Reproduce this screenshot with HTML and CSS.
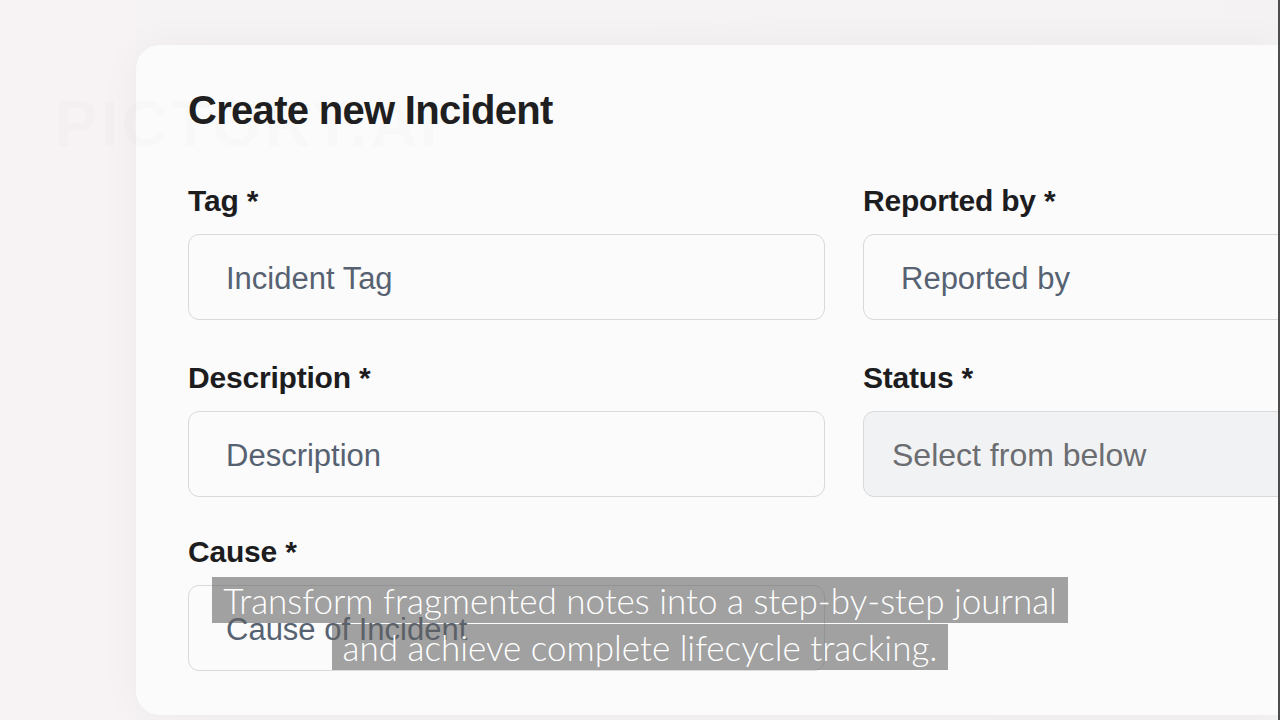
FILE: index.html
```html
<!DOCTYPE html>
<html lang="en">
<head>
<meta charset="utf-8">
<title>Create new Incident</title>
<link rel="stylesheet" href="styles.css">
</head>
<body>
<div class="page">
  <div class="card">
    <h1 class="title">Create new Incident</h1>
    <div class="grid">
      <div class="field">
        <div class="label">Tag *</div>
        <div class="input">Incident Tag</div>
      </div>
      <div class="field">
        <div class="label">Reported by *</div>
        <div class="input">Reported by</div>
      </div>
      <div class="field">
        <div class="label">Description *</div>
        <div class="input">Description</div>
      </div>
      <div class="field">
        <div class="label">Status *</div>
        <div class="input select">Select from below</div>
      </div>
      <div class="field cause">
        <div class="label">Cause *</div>
        <div class="input">Cause of Incident</div>
      </div>
    </div>
  </div>
</div>
<div class="watermark">
  <div class="wm-small">VIDEO MADE WITH</div>
  <div class="wm-big">PICTORY.AI</div>
</div>
<div class="caption">
  <span class="cap-line">Transform fragmented notes into a step-by-step journal</span>
  <span class="cap-line">and achieve complete lifecycle tracking.</span>
</div>
</body>
</html>
```
FILE: styles.css
```css
html, body {
  margin: 0;
  padding: 0;
}
body {
  width: 1280px;
  height: 720px;
  overflow: hidden;
  background: linear-gradient(90deg, #f7f3f5 0%, #f5f3f4 40%, #f4f2f3 100%);
  font-family: "Liberation Sans", Arial, sans-serif;
  position: relative;
}
.page {
  box-sizing: border-box;
  width: 1280px;
  height: 720px;
  padding: 45px 0 0 136px;
  border-right: 2px solid #4e4e4e;
  display: flex;
}
.card {
  box-sizing: border-box;
  width: 1142px;
  height: 670px;
  background: #fbfbfb;
  border-radius: 24px 0 0 24px;
  box-shadow: 0 0 40px rgba(0, 0, 0, 0.045);
  padding: 41px 0 0 52px;
  overflow: hidden;
}
.title {
  margin: 0;
  font-size: 40px;
  line-height: 48px;
  font-weight: 700;
  letter-spacing: -0.7px;
  color: #1f1f21;
}
.grid {
  margin-top: 49px;
  display: grid;
  grid-template-columns: 637px 637px;
  column-gap: 38px;
  row-gap: 40px;
}
.cause {
  margin-top: -3px;
}
.label {
  font-size: 30px;
  line-height: 36px;
  font-weight: 700;
  color: #1d1d1f;
  letter-spacing: -0.2px;
  margin-bottom: 15px;
}
.input {
  box-sizing: border-box;
  height: 86px;
  border: 1.5px solid #d8d9db;
  border-radius: 11px;
  background: #fbfbfb;
  padding-left: 37px;
  padding-top: 3px;
  display: flex;
  align-items: center;
  font-size: 31px;
  color: #566272;
}
.input.select {
  background: #f1f2f4;
  padding-left: 28px;
  font-size: 32px;
  color: #6c6d71;
}
.watermark {
  position: absolute;
  left: 55px;
  top: 46px;
  color: rgba(0, 0, 0, 0.012);
  font-family: "Liberation Sans", Arial, sans-serif;
  font-weight: 700;
  pointer-events: none;
}
.wm-small {
  font-size: 36px;
  line-height: 42px;
  letter-spacing: 1px;
}
.wm-big {
  font-size: 64px;
  line-height: 72px;
  letter-spacing: 3px;
}
.caption {
  position: absolute;
  left: 0;
  right: 0;
  top: 577px;
  display: flex;
  flex-direction: column;
  align-items: center;
  gap: 1px;
}
.cap-line {
  display: block;
  height: 46px;
  line-height: 46px;
  padding: 0 11px;
  background: rgba(96, 96, 96, 0.58);
  color: #ffffff;
  font-family: Lato, "Open Sans", sans-serif;
  font-weight: 300;
  font-size: 35px;
  letter-spacing: 0;
  white-space: nowrap;
}
```
